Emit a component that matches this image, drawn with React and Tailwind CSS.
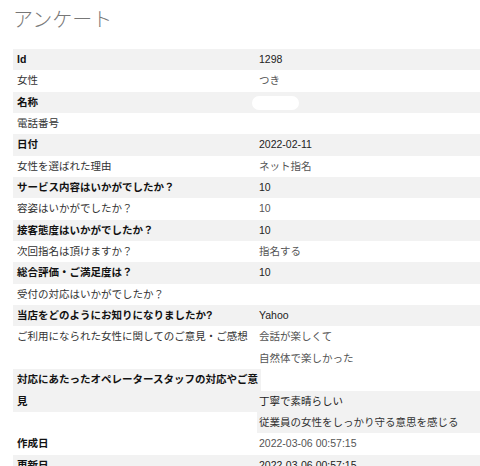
const rows = [
  { label: 'Id', value: '1298', gray: true },
  { label: '女性', value: 'つき' },
  { label: '名称', value: null, pill: true, gray: true },
  { label: '電話番号', value: '' },
  { label: '日付', value: '2022-02-11', gray: true },
  { label: '女性を選ばれた理由', value: 'ネット指名' },
  { label: 'サービス内容はいかがでしたか？', value: '10', gray: true },
  { label: '容姿はいかがでしたか？', value: '10' },
  { label: '接客態度はいかがでしたか？', value: '10', gray: true },
  { label: '次回指名は頂けますか？', value: '指名する' },
  { label: '総合評価・ご満足度は？', value: '10', gray: true },
  { label: '受付の対応はいかがでしたか？', value: '' },
  { label: '当店をどのようにお知りになりましたか?', value: 'Yahoo', gray: true },
  { label: 'ご利用になられた女性に関してのご意見・ご感想', value: '会話が楽しくて' },
]

function Row({ label, value, gray, pill, bold }) {
  const isBold = bold ?? gray
  return (
    <div className={`flex h-[21.35px] leading-[21.35px] ${gray ? 'bg-[#f2f2f2]' : 'bg-white'}`}>
      <div className={`w-[244px] shrink-0 pl-[4px] whitespace-nowrap ${isBold ? 'font-bold text-[#111]' : 'text-[#333]'}`}>
        {label}
      </div>
      <div className={`pl-[2px] whitespace-nowrap ${gray ? 'text-[#222]' : 'text-[#555]'}`}>
        {pill ? <span className="inline-block align-middle -ml-[7px] w-[47px] h-[14px] rounded-full bg-white blur-[0.5px]" /> : value}
      </div>
    </div>
  )
}

export default function App() {
  return (
    <div
      className="w-[480px] h-[466px] overflow-hidden bg-white pl-[13px] pt-[6px] text-[10.5px]"
      style={{ fontFamily: '"Liberation Sans", "Noto Sans CJK JP", sans-serif' }}
    >
      <h1 className="h-[28px] leading-[28px] text-[20px] font-light text-[#777]">アンケート</h1>

      {/* 回答一覧 */}
      <div className="mt-[15px]">
        {rows.map((r) => (
          <Row key={r.label} {...r} />
        ))}
        <Row label="" value="自然体で楽しかった" />

        <div className="flex h-[21.35px] leading-[21.35px]">
          <div className="bg-[#f2f2f2] pl-[4px] pr-[3px] font-bold text-[#111] whitespace-nowrap">
            対応にあたったオペレータースタッフの対応やご意
          </div>
        </div>
        <Row label="見" value="丁寧で素晴らしい" gray />
        <div className="flex h-[21.35px] leading-[21.35px]">
          <div className="w-[244px] shrink-0" />
          <div className="flex-1 bg-[#f2f2f2] pl-[2px] text-[#333] whitespace-nowrap">
            従業員の女性をしっかり守る意思を感じる
          </div>
        </div>
        <Row label="作成日" value="2022-03-06 00:57:15" bold />
        <Row label="更新日" value="2022-03-06 00:57:15" gray />
      </div>
    </div>
  )
}
